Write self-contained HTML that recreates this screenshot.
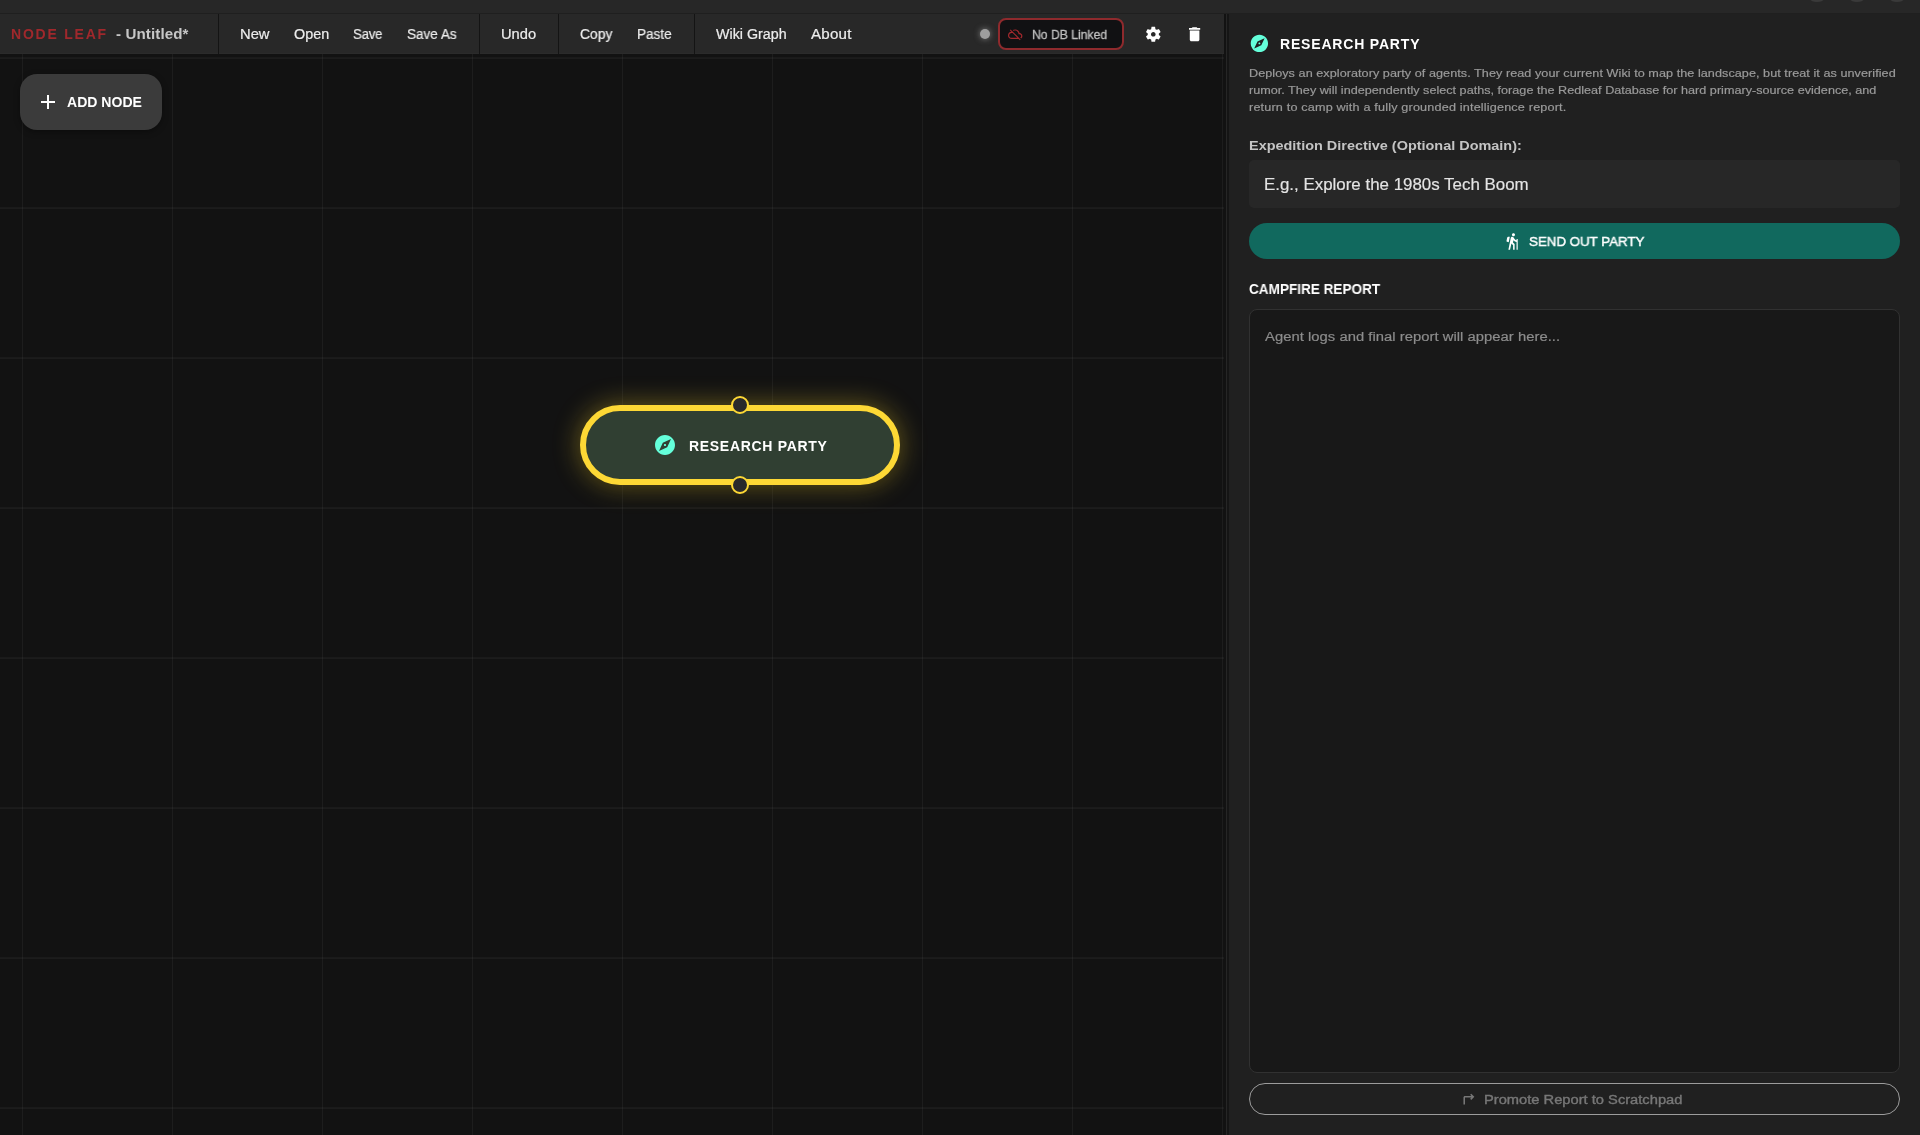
<!DOCTYPE html>
<html lang="en">
<head>
<meta charset="utf-8">
<title>Node Leaf - Untitled*</title>
<style>
*{box-sizing:border-box;margin:0;padding:0}
html,body{width:1920px;height:1135px;overflow:hidden;background:#121212;font-family:"Liberation Sans",sans-serif}
.abs{position:absolute}
.t{position:absolute;white-space:pre;line-height:1;will-change:transform;transform-origin:0 50%;font-family:"Liberation Sans",sans-serif}
#titlebar{left:0;top:0;width:1920px;height:13px;background:#272727}
#titleline{left:0;top:13px;width:1920px;height:1px;background:#1f1f1f}
.wc{position:absolute;top:-22.2px;width:24px;height:24px;border-radius:50%;background:#3a3a3a;filter:blur(0.6px)}
#canvas{left:0;top:54px;width:1224px;height:1081px;background:#121212;overflow:hidden}
.gv{position:absolute;top:0;width:1px;height:1081px;background:rgba(255,255,255,.048)}
.gh{position:absolute;left:0;height:2px;width:1224px;background:linear-gradient(rgba(255,255,255,.035) 50%,rgba(255,255,255,.044) 50%)}
#toolbar{left:0;top:14px;width:1224px;height:40px;background:#282828;border-bottom:1px solid #2b2b2b}
.sep{position:absolute;top:0;width:1px;height:40px;background:#141414}
#split{left:1224px;top:14px;width:5px;height:1121px;background:#121212}
#split i{position:absolute;top:0;height:100%;display:block}
#panel{left:1229px;top:14px;width:691px;height:1121px;background:#202020}
#addbtn{left:20px;top:74px;width:142px;height:56px;border-radius:17px;background:#3b3b3b;box-shadow:0 2px 6px rgba(0,0,0,.35)}
#dot{left:980px;top:29px;width:10px;height:10px;border-radius:50%;background:#9e9e9e;box-shadow:0 0 6px rgba(170,170,170,.7)}
#badge{left:998px;top:18px;width:126px;height:32px;border-radius:8px;background:#111113;border:2px solid #8f2a2d}
#node{left:580px;top:405px;width:320px;height:80px;border-radius:40px;background:#303f32;border:6px solid #fdd835;box-shadow:0 0 26px 1px rgba(253,216,53,.38),0 5px 14px rgba(0,0,0,.35)}
.handle{position:absolute;width:18px;height:18px;border-radius:50%;background:#29292b;border:2.3px solid #fdd835}
#inp{left:1249px;top:160px;width:651px;height:48px;border-radius:5px;background:#272727}
#send{left:1249px;top:223px;width:651px;height:36px;border-radius:18px;background:#11695e}
#report{left:1249px;top:309px;width:651px;height:764px;border-radius:8px;background:#181818;border:1px solid #313131}
#promote{left:1249px;top:1083px;width:651px;height:32px;border-radius:16px;border:1px solid #9c9c9c;background:#202020}
svg{position:absolute;overflow:visible}
</style>
</head>
<body>
<div id="titlebar" class="abs">
  <div class="wc" style="left:1805px"></div><div class="wc" style="left:1845px"></div><div class="wc" style="left:1885px"></div>
</div>
<div id="titleline" class="abs"></div>

<div id="canvas" class="abs">
  <div class="gv" style="left:22px"></div><div class="gv" style="left:172px"></div><div class="gv" style="left:322px"></div><div class="gv" style="left:472px"></div><div class="gv" style="left:622px"></div><div class="gv" style="left:772px"></div><div class="gv" style="left:922px"></div><div class="gv" style="left:1072px"></div><div class="gv" style="left:1222px"></div><div class="gh" style="top:3px"></div><div class="gh" style="top:153px"></div><div class="gh" style="top:303px"></div><div class="gh" style="top:453px"></div><div class="gh" style="top:603px"></div><div class="gh" style="top:753px"></div><div class="gh" style="top:903px"></div><div class="gh" style="top:1053px"></div>
</div>

<div id="toolbar" class="abs">
  <div class="sep" style="left:218px"></div>
  <div class="sep" style="left:479px"></div>
  <div class="sep" style="left:558px"></div>
  <div class="sep" style="left:694px"></div>
</div>

<div id="split" class="abs"><i style="left:2px;width:1px;background:#262626"></i><i style="left:3px;width:2px;background:#151515"></i></div>
<div id="panel" class="abs"></div>

<!-- add node button -->
<div id="addbtn" class="abs"></div>
<svg style="left:36px;top:90px" width="24" height="24" viewBox="0 0 24 24"><path fill="#fff" d="M19 13h-6v6h-2v-6H5v-2h6V5h2v6h6v2z"/></svg>

<!-- status -->
<div id="dot" class="abs"></div>
<div id="badge" class="abs"></div>
<svg style="left:1007.7px;top:26.8px" width="14.4" height="14.4" viewBox="0 0 24 24"><path fill="#a5292e" d="M19.35 10.04C18.67 6.59 15.64 4 12 4c-1.48 0-2.85.43-4.01 1.17l1.46 1.46C10.21 6.23 11.08 6 12 6c3.04 0 5.5 2.46 5.5 5.5v.5H19c1.66 0 3 1.34 3 3 0 1.13-.64 2.11-1.56 2.62l1.45 1.45C23.16 18.16 24 16.68 24 15c0-2.64-2.05-4.78-4.65-4.96zM3 5.27l2.75 2.74C2.56 8.15 0 10.77 0 14c0 3.31 2.69 6 6 6h11.73l2 2L21 20.73 4.27 4 3 5.27zM7.73 10l8 8H6c-2.21 0-4-1.79-4-4s1.79-4 4-4h1.73z"/></svg>
<!-- gear -->
<svg style="left:1144.3px;top:24.9px" width="18.6" height="18.6" viewBox="0 0 24 24"><path fill="#fff" d="M19.14,12.94c0.04-0.3,0.06-0.61,0.06-0.94c0-0.32-0.02-0.64-0.07-0.94l2.03-1.58c0.18-0.14,0.23-0.41,0.12-0.61 l-1.92-3.32c-0.12-0.22-0.37-0.29-0.59-0.22l-2.39,0.96c-0.5-0.38-1.03-0.7-1.62-0.94L14.4,2.81c-0.04-0.24-0.24-0.41-0.48-0.41 h-3.84c-0.24,0-0.43,0.17-0.47,0.41L9.25,5.35C8.66,5.59,8.12,5.92,7.63,6.29L5.24,5.33c-0.22-0.08-0.47,0-0.59,0.22L2.74,8.87 C2.62,9.08,2.66,9.34,2.86,9.48l2.03,1.58C4.84,11.36,4.8,11.69,4.8,12s0.02,0.64,0.07,0.94l-2.03,1.58 c-0.18,0.14-0.23,0.41-0.12,0.61l1.92,3.32c0.12,0.22,0.37,0.29,0.59,0.22l2.39-0.96c0.5,0.38,1.03,0.7,1.62,0.94l0.36,2.54 c0.05,0.24,0.24,0.41,0.48,0.41h3.84c0.24,0,0.44-0.17,0.47-0.41l0.36-2.54c0.59-0.24,1.13-0.56,1.62-0.94l2.39,0.96 c0.22,0.08,0.47,0,0.59-0.22l1.92-3.32c0.12-0.22,0.07-0.47-0.12-0.61L19.14,12.94z M12,15c-1.65,0-3-1.35-3-3s1.35-3,3-3s3,1.35,3,3S13.65,15,12,15z"/></svg>
<!-- trash -->
<svg style="left:1184.9px;top:24.5px" width="19.2" height="18.6" viewBox="0 0 24 24" preserveAspectRatio="none"><path fill="#fff" d="M6 19c0 1.1.9 2 2 2h8c1.1 0 2-.9 2-2V7H6v12zM19 4h-3.5l-1-1h-5l-1 1H5v2h14V4z"/></svg>

<!-- node -->
<div id="node" class="abs"></div>
<div class="handle" style="left:731px;top:396px"></div>
<div class="handle" style="left:731px;top:476px"></div>
<svg style="left:652.9px;top:433px" width="24" height="24" viewBox="0 0 24 24"><path fill="#64ffda" d="M12 10.9c-.61 0-1.1.49-1.1 1.1s.49 1.1 1.1 1.1c.61 0 1.1-.49 1.1-1.1s-.49-1.1-1.1-1.1zM12 2C6.48 2 2 6.48 2 12s4.48 10 10 10 10-4.48 10-10S17.52 2 12 2zm2.19 12.19L6 18l3.81-8.19L18 6l-3.81 8.19z"/></svg>

<!-- panel header icon -->
<svg style="left:1248.65px;top:33.45px" width="20.8" height="20.8" viewBox="0 0 24 24"><path fill="#64ffda" d="M12 10.9c-.61 0-1.1.49-1.1 1.1s.49 1.1 1.1 1.1c.61 0 1.1-.49 1.1-1.1s-.49-1.1-1.1-1.1zM12 2C6.48 2 2 6.48 2 12s4.48 10 10 10 10-4.48 10-10S17.52 2 12 2zm2.19 12.19L6 18l3.81-8.19L18 6l-3.81 8.19z"/></svg>

<div id="inp" class="abs"></div>
<div id="send" class="abs"></div>
<!-- hiking -->
<svg style="left:1503.4px;top:231.8px" width="18.6" height="18.6" viewBox="0 0 24 24"><path fill="#fff" d="M13.5,5.5c1.1,0,2-0.9,2-2s-0.9-2-2-2s-2,0.9-2,2S12.4,5.5,13.5,5.5z M17.5,10.78c-1.23-0.37-2.22-1.17-2.8-2.18l-1-1.6 c-0.41-0.65-1.11-1-1.84-1c-0.78,0-1.59,0.5-1.78,1.44S7,23,7,23h2.1l1.8-8l2.1,2v6h2v-7.5l-2.1-2l0.6-3c1,1.15,2.41,2.01,4,2.34V23H19V9h-1.5 L17.5,10.78z M7.43,13.13l-2.12-0.41c-0.54-0.11-0.9-0.63-0.79-1.17l0.76-3.93c0.21-1.08,1.26-1.79,2.34-1.58l1.16,0.23L7.43,13.13z"/></svg>

<div id="report" class="abs"></div>
<div id="promote" class="abs"></div>
<!-- turn right -->
<svg style="left:1458.1px;top:1089.3px" width="18.7" height="18.7" viewBox="0 0 24 24"><path fill="#777" d="M17.17,11l-1.59,1.59L17,14l4-4l-4-4l-1.41,1.41L17.17,9L9,9c-1.1,0-2,0.9-2,2v9h2v-9L17.17,11z"/></svg>

<span class="t" style="left:10.62px;top:27.15px;font-size:14px;font-weight:700;color:#a0282c;letter-spacing:1.779px">NODE LEAF</span>
<span class="t" style="left:115.72px;top:27.15px;font-size:14px;font-weight:700;color:#c6c6c6;letter-spacing:0.095px;transform:scaleX(1.0800)">- Untitled*</span>
<span class="t" style="left:240.32px;top:27.15px;font-size:14px;font-weight:400;color:#ececec;letter-spacing:0.000px;-webkit-text-stroke:0.2px #ececec;transform:scaleX(1.0537)">New</span>
<span class="t" style="left:294.42px;top:27.15px;font-size:14px;font-weight:400;color:#ececec;letter-spacing:0.000px;-webkit-text-stroke:0.2px #ececec;transform:scaleX(1.0254)">Open</span>
<span class="t" style="left:353.22px;top:27.15px;font-size:14px;font-weight:400;color:#ececec;letter-spacing:-0.208px;-webkit-text-stroke:0.2px #ececec;transform:scaleX(0.9400)">Save</span>
<span class="t" style="left:406.52px;top:27.15px;font-size:14px;font-weight:400;color:#ececec;letter-spacing:0.000px;-webkit-text-stroke:0.2px #ececec;transform:scaleX(0.9678)">Save As</span>
<span class="t" style="left:500.62px;top:27.15px;font-size:14px;font-weight:400;color:#ececec;letter-spacing:0.000px;-webkit-text-stroke:0.2px #ececec;transform:scaleX(1.0493)">Undo</span>
<span class="t" style="left:579.62px;top:27.15px;font-size:14px;font-weight:400;color:#ececec;letter-spacing:0.000px;-webkit-text-stroke:0.2px #ececec;transform:scaleX(0.9888)">Copy</span>
<span class="t" style="left:636.52px;top:27.15px;font-size:14px;font-weight:400;color:#ececec;letter-spacing:0.000px;-webkit-text-stroke:0.2px #ececec;transform:scaleX(0.9695)">Paste</span>
<span class="t" style="left:716.42px;top:27.15px;font-size:14px;font-weight:400;color:#ececec;letter-spacing:0.000px;-webkit-text-stroke:0.2px #ececec;transform:scaleX(1.0200)">Wiki Graph</span>
<span class="t" style="left:810.52px;top:27.15px;font-size:14px;font-weight:400;color:#ececec;letter-spacing:0.208px;-webkit-text-stroke:0.2px #ececec;transform:scaleX(1.0800)">About</span>
<span class="t" style="left:1031.79px;top:28.00px;font-size:13px;font-weight:400;color:#c0c0c0;letter-spacing:-0.026px;-webkit-text-stroke:0.3px #c0c0c0;transform:scaleX(0.9400)">No DB Linked</span>
<span class="t" style="left:67.42px;top:95.15px;font-size:14px;font-weight:700;color:#ffffff;letter-spacing:0.000px;transform:scaleX(1.0033)">ADD NODE</span>
<span class="t" style="left:689.22px;top:439.15px;font-size:14px;font-weight:700;color:#ffffff;letter-spacing:0.696px">RESEARCH PARTY</span>
<span class="t" style="left:1279.82px;top:37.15px;font-size:14px;font-weight:700;color:#ffffff;letter-spacing:0.819px">RESEARCH PARTY</span>
<span class="t" style="left:1248.78px;top:67.40px;font-size:11.7px;font-weight:400;color:#9a9a9a;letter-spacing:0.051px;-webkit-text-stroke:0.2px #9a9a9a;transform:scaleX(1.0800)">Deploys an exploratory party of agents. They read your current Wiki to map the landscape, but treat it as unverified</span>
<span class="t" style="left:1248.78px;top:84.40px;font-size:11.7px;font-weight:400;color:#9a9a9a;letter-spacing:0.009px;-webkit-text-stroke:0.2px #9a9a9a;transform:scaleX(1.0800)">rumor. They will independently select paths, forage the Redleaf Database for hard primary-source evidence, and</span>
<span class="t" style="left:1248.78px;top:101.40px;font-size:11.7px;font-weight:400;color:#9a9a9a;letter-spacing:0.165px;-webkit-text-stroke:0.2px #9a9a9a;transform:scaleX(1.0800)">return to camp with a fully grounded intelligence report.</span>
<span class="t" style="left:1248.75px;top:138.79px;font-size:13.6px;font-weight:700;color:#c4c4c4;letter-spacing:0.000px;transform:scaleX(1.0623)">Expedition Directive (Optional Domain):</span>
<span class="t" style="left:1264.30px;top:177.31px;font-size:15.7px;font-weight:400;color:#e4e4e4;letter-spacing:0.000px;-webkit-text-stroke:0.15px #e4e4e4;transform:scaleX(1.0774)">E.g., Explore the 1980s Tech Boom</span>
<span class="t" style="left:1529.24px;top:234.60px;font-size:13.7px;font-weight:400;color:#ffffff;letter-spacing:0.000px;-webkit-text-stroke:0.45px #ffffff;transform:scaleX(0.9725)">SEND OUT PARTY</span>
<span class="t" style="left:1249.22px;top:282.15px;font-size:14px;font-weight:700;color:#ffffff;letter-spacing:0.000px;transform:scaleX(0.9688)">CAMPFIRE REPORT</span>
<span class="t" style="left:1265.34px;top:329.60px;font-size:13.7px;font-weight:400;color:#8c8c8c;letter-spacing:0.035px;-webkit-text-stroke:0.2px #8c8c8c;transform:scaleX(1.0800)">Agent logs and final report will appear here...</span>
<span class="t" style="left:1484.14px;top:1092.80px;font-size:13.7px;font-weight:400;color:#777777;letter-spacing:-0.000px;-webkit-text-stroke:0.4px #777777;transform:scaleX(1.0731)">Promote Report to Scratchpad</span>
</body>
</html>
